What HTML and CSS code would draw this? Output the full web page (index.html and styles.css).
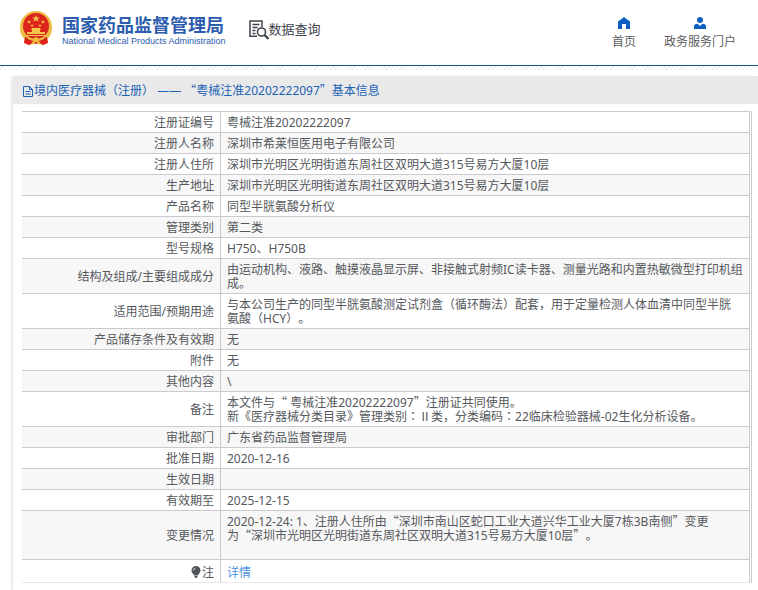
FILE: index.html
```html
<!DOCTYPE html>
<html lang="zh-CN">
<head>
<meta charset="utf-8">
<meta name="viewport" content="width=device-width, initial-scale=1">
<title>国家药品监督管理局 数据查询</title>
<link rel="stylesheet" href="styles.css">
</head>
<body>
<header class="site-header">
  <div class="brand">
    <svg class="emblem" viewBox="0 0 32 36" aria-hidden="true">
      <path fill="#efbd45" d="M16 1C7 1 0 8 0 17c0 6 2 10 5 12l-1 4 5 2 7-2 7 2 5-2-1-4c3-2 5-6 5-12C32 8 25 1 16 1z"/>
      <circle cx="16" cy="16" r="13" fill="#dc251c"/>
      <path fill="#dc251c" d="M5 27l6 2 5-1 5 1 6-2 1 6-5 2-4-2-3 1-3-1-4 2-5-2z"/>
      <path fill="#f6c748" d="M16 5l1 2.500h3l-2.300 1.600.9 2.700L16 10.200l-2.600 1.600.9-2.700L12 7.500h3zM9 10l.6 1.200H11l-1 .9.3 1.300L9 12.700l-1.300.7.3-1.300-1-.9h1.400zM23 10l.6 1.200H25l-1 .9.3 1.300-1.300-.7-1.300.7.3-1.300-1-.9h1.400zM12 14l.5 1h1l-.8.700.3 1-1-.5-1 .5.300-1-.8-.7h1zM20 14l.5 1h1l-.8.700.3 1-1-.5-1 .5.300-1-.8-.7h1z"/>
      <path fill="#f6c748" d="M12 18h8l1 2h-1v2h5v2H7v-2h5v-2h-1zM6 25h20l-1 1H7z"/>
      <path fill="none" stroke="#f1bc3c" stroke-width="2" d="M8 28l5 2 3-2 3 2 5-2M12 34l4-4 4 4"/>
    </svg>
    <div class="brand-text">
      <span class="brand-name">国家药品监督管理局</span>
      <span class="brand-en">National Medical Products Administration</span>
    </div>
  </div>
  <div class="section-name">
    <svg class="search-icon" viewBox="0 0 20 20" aria-hidden="true">
      <path fill="none" stroke="#3f444c" stroke-width="1.500" d="M8 16.200H1V1h12v6M3.500 4.500h7M3.500 7.500h5M3.500 10.500h3M3.500 13.500h3"/>
      <circle cx="12.500" cy="12" r="4" fill="none" stroke="#3f444c" stroke-width="1.600"/>
      <path stroke="#3f444c" stroke-width="2.400" d="M15.500 15l4 4"/>
    </svg>
    <span>数据查询</span>
  </div>
  <nav class="site-nav">
    <a href="#">
      <svg viewBox="0 0 12 12" aria-hidden="true"><path fill="#0e5fc0" d="M6 0l6 4.500V12H8V7H4v5H0V4.500z"/></svg>
      <span>首页</span>
    </a>
    <a href="#">
      <svg viewBox="0 0 12 12" aria-hidden="true"><circle cx="6" cy="3" r="3" fill="#0e5fc0"/><path fill="#0e5fc0" d="M0 12V9.500Q0 7 3.500 6.700L6 9l2.500-2.300Q12 7 12 9.500V12z"/></svg>
      <span>政务服务门户</span>
    </a>
  </nav>
</header>
<div class="hatch"></div>
<main class="panel">
  <h1 class="panel-title">
    <svg viewBox="0 0 10 11" aria-hidden="true"><path fill="none" stroke="#1b62b5" d="M.5.500h6l3 3v7h-9zM6.500.500v3h3M2.500 5.500h5M2.500 8h5"/></svg>
    <span>境内医疗器械<span class="c" lang="zh-TW">（</span>注册<span class="c" lang="zh-TW">）</span> —— <span class="q">“</span>粤械注准20202222097<span class="q">”</span>基本信息</span>
  </h1>
  <div class="table-wrap">
    <table class="info">
      <tr><th scope="row">注册证编号</th><td>粤械注准20202222097</td></tr>
      <tr><th scope="row">注册人名称</th><td>深圳市希莱恒医用电子有限公司</td></tr>
      <tr><th scope="row">注册人住所</th><td>深圳市光明区光明街道东周社区双明大道315号易方大厦10层</td></tr>
      <tr><th scope="row">生产地址</th><td>深圳市光明区光明街道东周社区双明大道315号易方大厦10层</td></tr>
      <tr><th scope="row">产品名称</th><td>同型半胱氨酸分析仪</td></tr>
      <tr><th scope="row">管理类别</th><td>第二类</td></tr>
      <tr><th scope="row">型号规格</th><td>H750、H750B</td></tr>
      <tr><th scope="row">结构及组成/主要组成成分</th><td>由运动机构、液路、触摸液晶显示屏、非接触式射频IC读卡器、测量光路和内置热敏微型打印机组成。</td></tr>
      <tr><th scope="row">适用范围/预期用途</th><td>与本公司生产的同型半胱氨酸测定试剂盒<span class="c" lang="zh-TW">（</span>循环酶法<span class="c" lang="zh-TW">）</span>配套，用于定量检测人体血清中同型半胱氨酸<span class="c" lang="zh-TW">（</span>HCY<span class="c" lang="zh-TW">）</span>。</td></tr>
      <tr><th scope="row">产品储存条件及有效期</th><td>无</td></tr>
      <tr><th scope="row">附件</th><td>无</td></tr>
      <tr><th scope="row">其他内容</th><td>\</td></tr>
      <tr><th scope="row">备注</th><td>本文件与<span class="q">“</span> 粤械注准20202222097<span class="q">”</span>注册证共同使用。<br>新《医疗器械分类目录》管理类别<span class="c" lang="zh-TW">：</span>Ⅱ类，分类编码<span class="c" lang="zh-TW">：</span>22临床检验器械-02生化分析设备。</td></tr>
      <tr><th scope="row">审批部门</th><td>广东省药品监督管理局</td></tr>
      <tr><th scope="row">批准日期</th><td>2020-12-16</td></tr>
      <tr><th scope="row">生效日期</th><td></td></tr>
      <tr><th scope="row">有效期至</th><td>2025-12-15</td></tr>
      <tr><th scope="row">变更情况</th><td>2020-12-24: 1、注册人住所由<span class="q">“</span>深圳市南山区蛇口工业大道兴华工业大厦7栋3B南侧<span class="q">”</span>变更<br>为<span class="q">“</span>深圳市光明区光明街道东周社区双明大道315号易方大厦10层<span class="q">”</span>。<br>&nbsp;</td></tr>
      <tr class="note"><th scope="row"><svg viewBox="0 0 10 12" aria-hidden="true"><path fill="#50535a" d="M5 0a4.500 4.500 0 0 1 4.500 4.500C9.500 7 7 8 7 9.500H3C3 8 .5 7 .5 4.500A4.500 4.500 0 0 1 5 0zM3.500 10h3v1l-1 1h-1l-1-1z"/><path fill="none" stroke="#fff" stroke-width=".8" d="M2.500 4.500Q2.500 2.500 4.500 2"/></svg>注</th><td><a href="#">详情</a></td></tr>
    </table>
  </div>
</main>
</body>
</html>
```
FILE: styles.css
```css
* {
  box-sizing: border-box;
}

body {
  margin: 0;
  background: #fff;
  color: #55585c;
  font: 12px/14px "Noto Sans", "Noto Sans CJK SC", sans-serif;
  text-spacing-trim: space-all;
}

a {
  text-decoration: none;
}

.site-header {
  display: flex;
  align-items: flex-start;
  height: 66px;
  padding: 10px 22px 0 20px;
  border-bottom: 1px solid #17568f;
}

.brand {
  display: flex;
  gap: 10px;
}

.emblem {
  width: 32px;
  height: 36px;
}

.brand-text {
  display: flex;
  flex-direction: column;
  padding-top: 4px;
  color: #2c5cad;
  white-space: nowrap;
}

.brand-name {
  font: bold 18px/20px "Noto Sans CJK SC", sans-serif;
}

.brand-en {
  font: 9px/14px "Liberation Sans", sans-serif;
}

.section-name {
  display: flex;
  padding-top: 10px;
  margin-left: 23px;
  color: #3f444c;
  font-size: 13px;
  line-height: 18px;
  white-space: nowrap;
}

.search-icon {
  width: 20px;
  height: 20px;
}

.site-nav {
  display: flex;
  gap: 28px;
  margin-left: auto;
  padding-top: 7px;
}

.site-nav a {
  display: flex;
  flex-direction: column;
  align-items: center;
  gap: 6px;
  color: #5c5c5c;
  white-space: nowrap;
}

.site-nav svg {
  width: 12px;
  height: 12px;
}

.hatch {
  height: 4px;
  background: repeating-linear-gradient(135deg, #fff 0 2px, #ececef 2px 3px);
}

.panel {
  margin: 6px 0 0 13px;
  padding-bottom: 7px;
  box-shadow: -1px 1px 3px #ddd;
}

.panel-title {
  display: flex;
  align-items: center;
  gap: 1px;
  height: 28px;
  margin: 0;
  padding: 2px 0 0 10px;
  background: #e9e9e9;
  color: #1b62b5;
  font-size: 12px;
  font-weight: normal;
}

.panel-title svg {
  width: 10px;
  height: 11px;
}

/* full-width quotation marks */
.q {
  font-family: "Noto Sans CJK SC", sans-serif;
  line-height: 1;
}

/* brackets and colons centred in their cell */
.c {
  font-family: "Noto Sans CJK TC", sans-serif;
  line-height: 1;
}

.table-wrap {
  margin: 7px 6px 0 9px;
  padding-right: 1px;
  border-right: 1px solid #c9c9ce;
}

.info {
  width: 100%;
  border-collapse: separate;
  border-spacing: 0;
  border-bottom: 1px solid #e8e8ea;
}

.info th,
.info td {
  padding: 4px 6px 2px;
  border-top: 1px solid #c9c9ce;
  border-right: 1px solid #c9c9ce;
  vertical-align: middle;
}

.info th {
  width: 199px;
  padding-left: 0;
  font-weight: normal;
  text-align: right;
}

.info tr:nth-child(even) {
  background: #f7f7f7;
}

.info .note th,
.info .note td {
  padding-top: 6px;
}

.note svg {
  width: 10px;
  height: 12px;
  margin-right: 1px;
  vertical-align: -1px;
}

.note a {
  color: #4b92df;
}
```
